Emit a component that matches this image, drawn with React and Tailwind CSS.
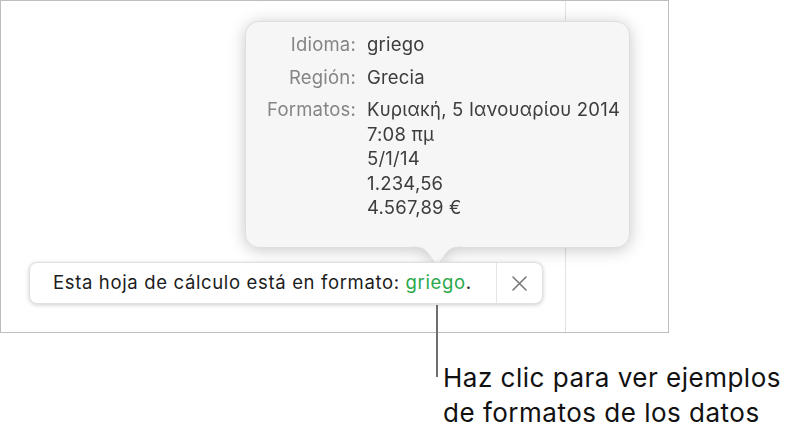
export default function App() {
  const font = { fontFamily: 'Inter, "Liberation Sans", Arial, sans-serif' };
  return (
    <div className="relative w-[796px] h-[438px] bg-white overflow-hidden" style={font}>
      {/* document frame */}
      <div className="absolute left-0 top-0 w-[669px] h-[333px] border border-[#bdbdbd] bg-white">
        <div className="ml-[564px] w-px h-full bg-[#e2e2e2]" />
      </div>

      {/* popover */}
      <div className="absolute left-[245px] top-[21px] w-[385px] drop-shadow-[0_2px_8px_rgba(0,0,0,0.22)]">
        <div className="relative h-[227px] rounded-[14px] bg-[#f6f6f6] border border-[#dedede] pt-[10px]">
          <div className="grid grid-cols-[110px_1fr] gap-x-[11px] gap-y-[8px] text-[18.5px] tracking-[0.2px] leading-[24.5px]">
            <div className="text-right text-[#858585]">Idioma:</div>
            <div className="text-[#3d3d3d]">griego</div>
            <div className="text-right text-[#858585]">Región:</div>
            <div className="text-[#3d3d3d]">Grecia</div>
            <div className="text-right text-[#858585]">Formatos:</div>
            <div className="text-[#3d3d3d] flex flex-col whitespace-nowrap">
              <span>Κυριακή, 5 Ιανουαρίου 2014</span>
              <span>7:08 πμ</span>
              <span>5/1/14</span>
              <span>1.234,56</span>
              <span>4.567,89 €</span>
            </div>
          </div>
        </div>
        <svg className="absolute left-[166px] top-[225px]" width="52" height="22" viewBox="0 0 52 22">
          <path d="M0 1 C12 1 14 3 19 10 L26 20 L33 10 C38 3 40 1 52 1 L52 0 L0 0 Z" fill="#f6f6f6" />
          <path d="M0 1 C12 1 14 3 19 10 L26 20 L33 10 C38 3 40 1 52 1" fill="none" stroke="#dedede" strokeWidth="1" />
        </svg>
      </div>

      {/* notification bar */}
      <div className="absolute left-[29px] top-[262px] w-[514px] h-[42px] flex items-center rounded-[8px] bg-white border border-[#e0e0e0] shadow-[0_1px_4px_rgba(0,0,0,0.2)]">
        <div className="flex-1 pl-[23px] text-[18.5px] tracking-[0.65px] text-[#1c1c1c] whitespace-nowrap">
          Esta hoja de cálculo está en formato: <span className="text-[#2aa84a]">griego</span>.
        </div>
        <div className="w-px h-full bg-[#e4e4e4]" />
        <div className="w-[45px] h-full flex items-center justify-center">
          <svg width="15" height="15" viewBox="0 0 15 15">
            <path d="M1 1 L14 14 M14 1 L1 14" stroke="#7a7a7a" strokeWidth="1.6" strokeLinecap="round" />
          </svg>
        </div>
      </div>

      {/* callout */}
      <div className="absolute left-[436px] top-[305px] w-[2px] h-[72px] bg-[#6e6e6e]" />
      <div className="absolute left-[443px] top-[360px] text-[26px] tracking-[0.5px] leading-[35px] text-[#111] whitespace-nowrap">
        <div>Haz clic para ver ejemplos</div>
        <div>de formatos de los datos</div>
      </div>
    </div>
  );
}
